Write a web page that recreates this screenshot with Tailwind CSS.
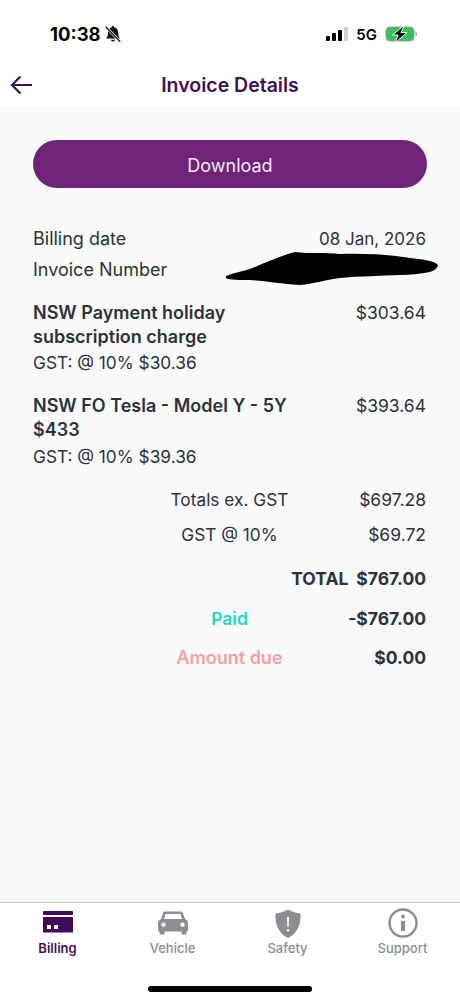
<!DOCTYPE html>
<html lang="en">
  <head>
    <meta charset="UTF-8" />
    <meta name="viewport" content="width=device-width, initial-scale=1" />
    <title>Invoice Details</title>
    <script src="https://cdn.jsdelivr.net/npm/@tailwindcss/browser@4"></script>
  </head>
  <body class="bg-white">
    <div class="flex h-[1000px] w-[460px] flex-col overflow-hidden font-['Inter',sans-serif] text-[#2c3238]">
      <!-- status bar -->
      <div class="flex h-[68px] shrink-0 items-center justify-between bg-white pr-[42px] pl-[50px] text-black">
        <div class="flex items-center gap-[3px]">
          <span class="text-[18.500px] leading-none font-bold">10:38</span>
          <svg width="18" height="18" viewBox="0 0 16 16" fill="#111">
            <path d="M8 1a1.200 1.200 0 0 1 1.200 1.100C11.400 2.700 12.500 4.500 12.600 7l.2 2.500 1.400 2.500H2l1.300-2.500.2-2.500C3.600 4.500 4.700 2.700 6.800 2.100A1.200 1.200 0 0 1 8 1zM6.300 13h3.400a1.700 1.700 0 0 1-3.400 0z" />
            <path d="M1.500 1.500l13 13.500" stroke="#fff" stroke-width="2.400" />
            <path d="M1.500 1.500l13 13.500" stroke="#111" stroke-width="1.200" />
          </svg>
        </div>
        <div class="flex items-center gap-[8px]">
          <div class="flex items-end gap-[2px]">
            <span class="h-[5px] w-[4px] rounded-[1px] bg-black"></span>
            <span class="h-[8px] w-[4px] rounded-[1px] bg-black"></span>
            <span class="h-[11px] w-[4px] rounded-[1px] bg-black"></span>
            <span class="h-[14px] w-[4px] rounded-[1px] bg-[#cfcfcf]"></span>
          </div>
          <span class="text-[15px] leading-none font-semibold">5G</span>
          <svg width="33" height="16" viewBox="0 0 33 16">
            <rect x="1" y="1" width="28" height="14" rx="4" fill="#34c25c" stroke="#9a9a9a" stroke-width="1" />
            <path d="M30.500 6v4c1-.3 1.500-1 1.500-2s-.5-1.700-1.500-2z" fill="#9a9a9a" />
            <path d="M19.500 -1L7.500 9h5.500l-3 8L22 6.500h-6z" fill="#111" stroke="#fff" stroke-width="1" />
          </svg>
        </div>
      </div>

      <!-- title bar -->
      <div class="relative flex h-[38px] shrink-0 items-center justify-center bg-white">
        <svg class="absolute top-[7px] left-[10px]" width="23" height="20" viewBox="0 0 23 20" fill="none" stroke="#3f1152" stroke-width="2.200">
          <path d="M22 10H2M10.500 1.500L2 10l8.500 8.500" />
        </svg>
        <h1 class="relative -top-[1px] text-[19.500px] font-semibold text-[#3f1152]">Invoice Details</h1>
      </div>

      <!-- body -->
      <main class="relative flex-1 bg-[#f9f9fa] pt-[34px] pr-[34px] pl-[33px] text-[17.500px]">
        <button class="flex h-[48px] w-[394px] items-center justify-center rounded-[24px] bg-[#6f2477] pt-[2px] text-[18px] text-[#f3e8f4]">Download</button>

        <div class="mt-[38px] flex justify-between leading-[26px]">
          <span class="text-[18px]">Billing date</span>
          <span class="text-[17px]">08 Jan, 2026</span>
        </div>
        <div class="relative mt-[5px] leading-[26px]">
          <span class="text-[18px]">Invoice Number</span>
          <!-- redaction scribble -->
          <svg class="absolute -top-[10px] left-[192px]" width="214" height="40" viewBox="0 0 214 40" fill="#000">
            <path d="M1 29C10 25 22 24 30 20 44 14 58 8 70 5 84 7 100 5 115 7 140 6 168 8 185 11 196 12 210 14 213 18 212 22 208 24 205 25 195 27 185 28 175 28 155 29 135 29 115 31 100 33 88 37 75 38 55 37 40 34 25 33 15 33 5 33 1 31z" />
          </svg>
        </div>

        <div class="mt-[18px] flex justify-between">
          <div>
            <p class="w-[260px] text-[18px] leading-[24px] font-semibold">NSW Payment holiday<br />subscription charge</p>
            <p class="mt-[1px] text-[17.300px] leading-[26px]">GST: @ 10% $30.36</p>
          </div>
          <span class="leading-[24px]">$303.64</span>
        </div>
        <div class="mt-[18px] flex justify-between">
          <div>
            <p class="w-[280px] text-[18px] leading-[24px] font-semibold">NSW FO Tesla - Model Y - 5Y<br />$433</p>
            <p class="mt-[2px] text-[17.300px] leading-[26px]">GST: @ 10% $39.36</p>
          </div>
          <span class="leading-[24px]">$393.64</span>
        </div>

        <div class="mt-[17px] grid grid-cols-[1fr_auto_1fr] leading-[26px]">
          <span class="col-start-2 text-center text-[17.300px]">Totals ex. GST</span>
          <span class="text-right">$697.28</span>
          <span class="col-start-2 mt-[9px] text-center text-[17.300px]">GST @ 10%</span>
          <span class="mt-[9px] text-right">$69.72</span>
        </div>

        <div class="mt-[18px] flex justify-end gap-[8px] text-[17.500px] leading-[26px] font-bold">
          <span>TOTAL</span>
          <span>$767.00</span>
        </div>
        <div class="mt-[14px] grid grid-cols-[1fr_auto_1fr] text-[17.500px] leading-[26px] font-bold">
          <span class="col-start-2 text-center font-semibold text-[#21d9c7]">Paid</span>
          <span class="text-right">-$767.00</span>
        </div>
        <div class="mt-[13px] grid grid-cols-[1fr_auto_1fr] text-[17.500px] leading-[26px] font-bold">
          <span class="col-start-2 text-center text-[18px] font-semibold text-[#f5a0a0]">Amount due</span>
          <span class="text-right">$0.00</span>
        </div>
      </main>

      <!-- tab bar -->
      <nav class="relative h-[98px] shrink-0 border-t border-[#c6c6c8] bg-white">
        <div class="grid grid-cols-4 pt-[5px] text-[13px] font-medium text-[#8e8e92]">
          <a href="#" class="flex flex-col items-center font-semibold text-[#3f1152]">
            <svg width="32" height="30" viewBox="0 0 32 30" fill="#3f0a57">
              <rect x="1" y="3" width="30" height="4" rx="1" />
              <path d="M1 9h30v15.500H1z" />
              <rect x="5" y="17" width="4" height="4" fill="#fff" />
              <rect x="12" y="17" width="4" height="4" fill="#fff" />
            </svg>
            <span class="mt-[1px]">Billing</span>
          </a>
          <a href="#" class="flex flex-col items-center">
            <svg width="32" height="30" viewBox="0 0 32 30" fill="#8e8e92">
              <path fill-rule="evenodd" d="M8 3.500h16c1 0 1.700.5 2 1.500l2 6c1.500.7 3 2 3 4v7c0 1-.5 1.500-1.500 1.500v1.500c0 1-.5 1.500-1.500 1.500h-2c-1 0-1.500-.5-1.500-1.500V23.500H7.500V25c0 1-.5 1.500-1.500 1.500H4c-1 0-1.500-.5-1.500-1.500v-1.500C1.500 23.500 1 23 1 22v-7c0-2 1.500-3.300 3-4l2-6c.3-1 1-1.500 2-1.500zM8.500 6L7 11h18l-1.500-5zM6.500 14.500a2.200 2.200 0 1 0 .01 0zM25.500 14.500a2.200 2.200 0 1 0 .01 0z" />
            </svg>
            <span class="mt-[1px]">Vehicle</span>
          </a>
          <a href="#" class="flex flex-col items-center">
            <svg width="32" height="30" viewBox="0 0 32 30" fill="#8e8e92">
              <path fill-rule="evenodd" d="M16 1.500C20 4 24 5 28.500 5.500 29 16 26 25 16 30 6 25 3 16 3.500 5.500 8 5 12 4 16 1.500zM15 9l.4 10h1.200L17 9zM16 21a1.300 1.300 0 1 0 .01 0z" />
            </svg>
            <span class="mt-[1px]">Safety</span>
          </a>
          <a href="#" class="flex flex-col items-center">
            <svg width="32" height="30" viewBox="0 0 32 30" fill="none" stroke="#8e8e92">
              <circle cx="16" cy="15" r="13.500" stroke-width="2.400" />
              <circle cx="16" cy="8.500" r="2" fill="#8e8e92" stroke="none" />
              <path d="M16 13v10" stroke-width="4" />
            </svg>
            <span class="mt-[1px]">Support</span>
          </a>
        </div>
        <div class="absolute bottom-[8px] left-[148px] h-[6px] w-[164px] rounded-full bg-black"></div>
      </nav>
    </div>
  </body>
</html>
